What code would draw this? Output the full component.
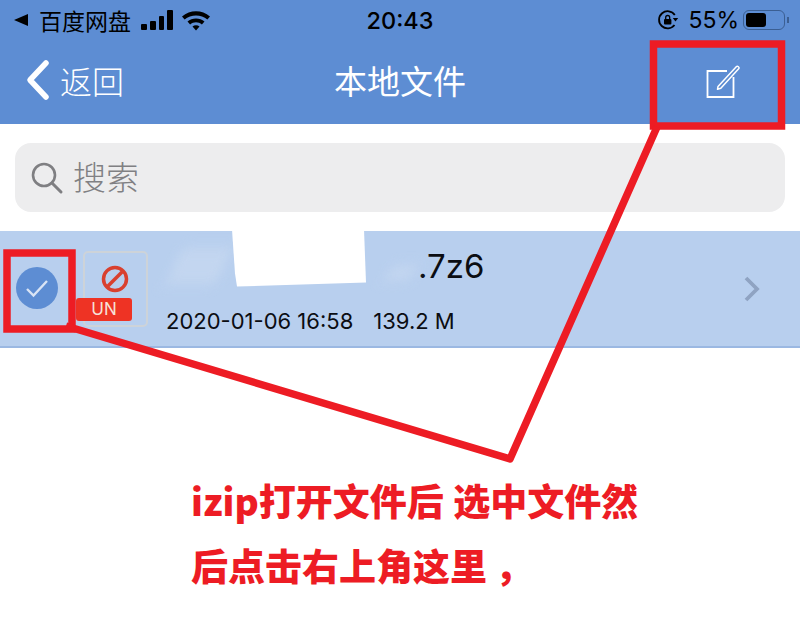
<div class="page">
  <header class="head">
    <div class="status">
      <div class="st-left">
        <span class="tri"></span>
        <span class="app">百度网盘</span>
        <div class="bars"><i class="b1"></i><i class="b2"></i><i class="b3"></i><i class="b4"></i></div>
        <svg class="wifi" width="30" height="22" viewBox="0 0 30 22">
          <path d="M1 7.500C9 .5 21 .5 29 7.500l-2.600 3C20 5 10 5 3.600 10.500z" fill="#000"/>
          <path d="M6.500 12.500C11 8.500 19 8.500 23.500 12.500l-2.600 2.900C17.500 12.600 12.500 12.600 9.100 15.400z" fill="#000"/>
          <path d="M11.500 17.500c2-1.600 5-1.600 7 0L15 21.500z" fill="#000"/>
        </svg>
      </div>
      <div class="time">20:43</div>
      <div class="st-right">
        <svg class="lock" width="22" height="22" viewBox="0 0 22 22">
          <path d="M17.500 16A8.600 8.600 0 1 1 17.800 6" fill="none" stroke="#000" stroke-width="1.800"/>
          <path d="M15.800 9h5.400l-2.700 3.600z" fill="#000"/>
          <rect x="7" y="10" width="7.400" height="5.600" rx="1" fill="#000"/>
          <path d="M8.700 10V8.500a2 2 0 0 1 4 0V10" fill="none" stroke="#000" stroke-width="1.300"/>
        </svg>
        <span class="pct">55%</span>
        <div class="batt"><div class="batt-fill"></div></div>
        <span class="nub"></span>
      </div>
    </div>
    <nav class="nav">
      <div class="back">
        <svg width="26" height="42" viewBox="0 0 26 42">
          <path d="M22 4 6 21l16 17" fill="none" stroke="#fff" stroke-width="5.500" stroke-linecap="round" stroke-linejoin="round"/>
        </svg>
        <span>返回</span>
      </div>
      <div class="title">本地文件</div>
      <svg class="edit" width="38" height="38" viewBox="0 0 38 38">
        <path d="M22 9H2.500v26h26V15" fill="none" stroke="#fff" stroke-width="1.800"/>
        <path d="M13 24.500 31.500 4.500c1-1 3.300.9 2.400 2.100L15.800 26.300l-3.300 1z" fill="none" stroke="#fff" stroke-width="1.500" stroke-linejoin="round"/>
      </svg>
    </nav>
  </header>

  <div class="search-wrap">
    <div class="search">
      <svg width="34" height="34" viewBox="0 0 34 34">
        <circle cx="14" cy="14" r="11" fill="none" stroke="#7f7f82" stroke-width="2.600"/>
        <path d="M22 22l9 9" stroke="#7f7f82" stroke-width="3" stroke-linecap="round"/>
      </svg>
      <span>搜索</span>
    </div>
  </div>

  <div class="row">
    <div class="check">
      <svg width="24" height="20" viewBox="0 0 24 20">
        <path d="M2 11l6.500 6.500L22 3" fill="none" stroke="#d9e4f5" stroke-width="2.400"/>
      </svg>
    </div>
    <div class="thumb">
      <svg width="38" height="38" viewBox="0 0 38 38">
        <circle cx="19" cy="17" r="11.500" fill="none" stroke="#d9402f" stroke-width="3.500"/>
        <path d="M11 25 27 9" stroke="#d9402f" stroke-width="3.500"/>
      </svg>
      <div class="un">UN</div>
    </div>
    <div class="info">
      <div class="name">
        <span class="smudge"></span>
        <span class="redact"></span>
        <span class="smudge small"></span>
        <span class="ext">.7z6</span>
      </div>
      <div class="meta"><span>2020-01-06 16:58</span><span>139.2 M</span></div>
    </div>
    <svg class="chev" width="18" height="28" viewBox="0 0 18 28">
      <path d="M3 3l11 11L3 25" fill="none" stroke="#8fa3c2" stroke-width="3.800"/>
    </svg>
  </div>

  <div class="note">
    <p>izip打开文件后 选中文件然</p>
    <p>后点击右上角这里<span class="comma">，</span></p>
  </div>

  <svg class="marks" width="800" height="623" viewBox="0 0 800 623">
    <g fill="none" stroke="#ed1c24" stroke-width="7.500" stroke-linejoin="round">
      <rect x="653.500" y="44" width="128" height="82" stroke-linejoin="miter"/>
      <rect x="7" y="253" width="65" height="76" stroke-linejoin="miter"/>
      <path d="M657 127 510 459 66 326"/>
    </g>
  </svg>
</div>

<style>
  :global(body) {
    margin: 0;
    background: #fff;
  }
  .page {
    position: relative;
    width: 800px;
    height: 623px;
    overflow: hidden;
    font-family: Inter, "Noto Sans CJK SC", sans-serif;
  }
  .head {
    height: 124px;
    background: #5d8dd3;
    display: flex;
    flex-direction: column;
  }
  .status {
    height: 40px;
    display: grid;
    grid-template-columns: 1fr auto 1fr;
    align-items: center;
    padding: 0 11px 0 14px;
    color: #000;
  }
  .st-left {
    display: flex;
    align-items: center;
    height: 40px;
  }
  .tri {
    width: 0;
    height: 0;
    border-top: 6px solid transparent;
    border-bottom: 6px solid transparent;
    border-right: 14px solid #000;
    margin-right: 11px;
  }
  .app {
    font-size: 23px;
    font-family: "Noto Sans CJK SC", sans-serif;
    margin-right: 10px;
  }
  .bars {
    display: flex;
    align-items: flex-end;
    gap: 3px;
    height: 20px;
    margin-right: 8px;
  }
  .bars i {
    display: block;
    width: 5.750px;
    background: #000;
    border-radius: 1px;
  }
  .b1 { height: 6px; }
  .b2 { height: 9px; }
  .b3 { height: 14px; }
  .b4 { height: 20px; }
  .time {
    font-size: 23.500px;
    font-weight: 500;
    margin-right: 3px;
  }
  .st-right {
    display: flex;
    align-items: center;
    justify-content: flex-end;
  }
  .lock { margin-right: 9px; }
  .pct {
    font-size: 23px;
    margin-right: 4px;
  }
  .batt {
    width: 42px;
    height: 20px;
    border: 1.500px solid #3b5f93;
    border-radius: 6px;
    padding: 2px;
    box-sizing: border-box;
    display: flex;
  }
  .batt-fill {
    width: 20px;
    background: #000;
    border-radius: 3px;
  }
  .nub {
    width: 2px;
    height: 6px;
    background: #3b5f93;
    margin-left: 2px;
  }
  .nav {
    flex: 1;
    display: grid;
    grid-template-columns: 1fr auto 1fr;
    align-items: center;
    padding: 0 24px 4px;
    color: #fff;
  }
  .back {
    display: flex;
    align-items: center;
    gap: 10px;
    font-size: 32px;
    font-family: "Noto Sans CJK SC", sans-serif;
    font-weight: 300;
  }
  .title {
    font-size: 33px;
    font-family: "Noto Sans CJK SC", sans-serif;
    font-weight: 400;
  }
  .edit {
    justify-self: end;
    margin-right: 33px;
    margin-top: 2px;
  }
  .search-wrap {
    padding: 19px 15px;
  }
  .search {
    height: 69px;
    background: #ededee;
    border-radius: 16px;
    display: flex;
    align-items: center;
    padding-left: 15px;
    gap: 9px;
    box-sizing: border-box;
    color: #808083;
    font-size: 33px;
    line-height: 1;
    font-family: "Noto Sans CJK SC", sans-serif;
    font-weight: 300;
  }
  .search span {
    margin-top: -2px;
  }
  .row {
    position: relative;
    height: 117px;
    background: #b8cfee;
    border-bottom: 2px solid #9bb8e2;
    box-sizing: border-box;
    display: flex;
    align-items: center;
    padding-left: 16px;
  }
  .check {
    width: 42px;
    height: 42px;
    border-radius: 50%;
    background: #5d8dd3;
    display: flex;
    align-items: center;
    justify-content: center;
    margin-right: 25px;
    margin-top: -1px;
    flex: none;
  }
  .thumb {
    position: relative;
    width: 65px;
    height: 76px;
    border: 2px solid #cdd3d9;
    border-radius: 5px;
    box-sizing: border-box;
    margin-top: 1px;
    padding: 9px 0 0 11px;
    margin-right: 18px;
    flex: none;
  }
  .un {
    position: absolute;
    left: -9px;
    bottom: 4px;
    width: 56px;
    height: 23px;
    line-height: 23px;
    background: #ee3324;
    border-radius: 3px;
    color: #f6e0d8;
    font-size: 17px;
    text-align: center;
  }
  .info {
    flex: 1;
    margin-top: -1px;
    color: #0b0d12;
  }
  .name {
    display: flex;
    align-items: center;
    height: 46px;
    font-size: 33px;
  }
  .smudge {
    width: 50px;
    height: 36px;
    margin-left: 8px;
    margin-right: 8px;
    background: #c3d6f0;
    filter: blur(6px);
    transform: skewX(-25deg);
    flex: none;
  }
  .smudge.small {
    width: 26px;
    height: 14px;
    margin: 14px 0 0 22px;
  }
  .redact {
    width: 134px;
    height: 58px;
    background: #fff;
    margin-top: -14px;
    flex: none;
    clip-path: polygon(0 0, 132px 0, 134px 53px, 5px 57px, 3px 44px);
  }
  .ext {
    margin-left: 4px;
  }
  .meta {
    display: flex;
    gap: 20px;
    font-size: 22px;
    margin-top: 19px;
  }
  .chev {
    margin-right: 39px;
    flex: none;
  }
  .note {
    position: absolute;
    left: 191px;
    top: 468px;
    color: #ed1c24;
    font-family: "Noto Sans CJK SC", sans-serif;
    font-size: 37px;
    font-weight: 900;
    word-spacing: 1px;
  }
  .note p {
    margin: 0;
    line-height: 65px;
    white-space: nowrap;
  }
  .comma {
    margin-left: 8px;
  }
  .marks {
    position: absolute;
    left: 0;
    top: 0;
    pointer-events: none;
  }
</style>
